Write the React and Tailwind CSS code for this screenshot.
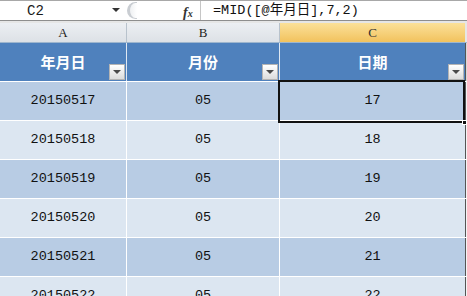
const rows = [
  ['20150517', '05', '17'],
  ['20150518', '05', '18'],
  ['20150519', '05', '19'],
  ['20150520', '05', '20'],
  ['20150521', '05', '21'],
  ['20150522', '05', '22'],
]

const mono = { fontFamily: '"Liberation Mono", "Noto Sans CJK SC", monospace' }

function FilterButton() {
  return (
    <div className="absolute right-[1px] bottom-[1px] w-[16px] h-[16px] bg-gradient-to-b from-[#ffffff] to-[#dcdcdc] border border-[#b4b4b4] flex items-center justify-center">
      <div className="w-0 h-0 border-l-[4px] border-r-[4px] border-t-[4px] border-l-transparent border-r-transparent border-t-[#4a4a4a]" />
    </div>
  )
}

export default function App() {
  return (
    <div className="w-[467px] h-[296px] overflow-hidden bg-white relative" style={mono}>
      {/* Formula bar */}
      <div className="h-[21px] flex items-stretch border-t border-[#a8a8a8] border-b border-b-[#8e8e8e] bg-white">
        <div className="w-[124px] flex items-center relative">
          <span className="ml-[27px] text-[14px] text-[#1a1a1a] leading-none">C2</span>
          <div className="absolute left-[112px] top-[7px] w-0 h-0 border-l-[4px] border-r-[4px] border-t-[4px] border-l-transparent border-r-transparent border-t-[#333]" />
        </div>
        <div className="w-[76px] relative flex items-center">
          <div className="ml-[3px] w-[10px] h-[17px] rounded-l-full border-l-[3px] border-t border-b border-[#c9cdd2] bg-gradient-to-r from-[#eef0f2] to-white" />
          <span className="absolute left-[59px] top-[1px] text-[14px] italic font-bold text-[#333]" style={{ fontFamily: '"Liberation Serif", serif' }}>
            f<span className="text-[10px]">x</span>
          </span>
        </div>
        <div className="w-[1px] bg-[#c6c6c6]" />
        <div className="flex-1 flex items-center pl-[12px] text-[13.5px] text-[#111] leading-none">
          =MID([@年月日],7,2)
        </div>
      </div>
      <div className="h-[2px] bg-[#e6e6e6]" />

      {/* Column letters */}
      <div className="h-[20px] flex border-b border-[#9eb6ce]" style={{ fontFamily: '"Liberation Serif", serif' }}>
        <div className="w-[126px] bg-gradient-to-b from-[#eceff3] to-[#dde1e6] flex items-center justify-center text-[13px] text-[#222]">A</div>
        <div className="w-[1px] bg-[#b8c2cc]" />
        <div className="w-[152px] bg-gradient-to-b from-[#eceff3] to-[#dde1e6] flex items-center justify-center text-[13px] text-[#222]">B</div>
        <div className="w-[1px] bg-[#b8c2cc]" />
        <div className="w-[185px] bg-gradient-to-b from-[#fbe199] to-[#f2c25c] flex items-center justify-center text-[13px] text-[#333]">C</div>
        <div className="flex-1 bg-[#e6e6e6]" />
      </div>

      {/* Table header */}
      <div className="h-[38px] flex bg-[#4f81bd] text-white font-bold text-[15px]" style={{ fontFamily: '"Noto Sans CJK SC", sans-serif' }}>
        <div className="w-[126px] relative flex items-center justify-center">年月日<FilterButton /></div>
        <div className="w-[1px] bg-[#dfe8f3]" />
        <div className="w-[152px] relative flex items-center justify-center">月份<FilterButton /></div>
        <div className="w-[1px] bg-[#dfe8f3]" />
        <div className="w-[185px] relative flex items-center justify-center">日期<FilterButton /></div>
        <div className="flex-1 bg-[#d8d8d8] border-l border-[#555]" />
      </div>

      {/* Data rows */}
      {rows.map((r, i) => (
        <div key={i} className={`h-[39px] flex border-t border-white text-[13.5px] text-[#111] ${i % 2 === 0 ? 'bg-[#b8cce4]' : 'bg-[#dce6f1]'}`}>
          <div className="w-[126px] flex items-center justify-center">{r[0]}</div>
          <div className="w-[1px] bg-white" />
          <div className="w-[152px] flex items-center justify-center">{r[1]}</div>
          <div className="w-[1px] bg-white" />
          <div className="w-[185px] flex items-center justify-center">{r[2]}</div>
          <div className="flex-1 bg-[#f4f4f4] border-l border-[#555]" />
        </div>
      ))}

      {/* Active cell */}
      <div className="absolute left-[278px] top-[80px] w-[187px] h-[43px] border-2 border-[#111] pointer-events-none">
        <div className="absolute -right-[4px] -bottom-[4px] w-[5px] h-[5px] bg-[#111] border border-white" />
      </div>
    </div>
  )
}
